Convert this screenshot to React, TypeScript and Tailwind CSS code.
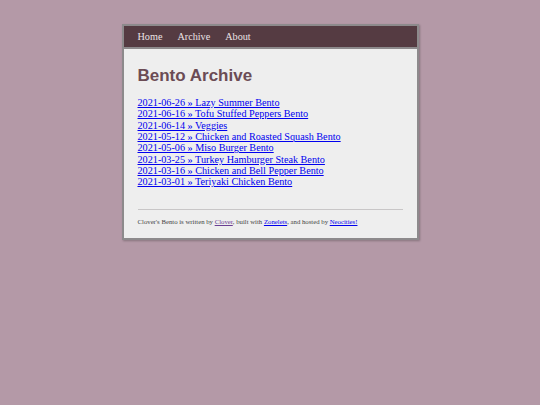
import React from "react";

const posts = [
  "2021-06-26 » Lazy Summer Bento",
  "2021-06-16 » Tofu Stuffed Peppers Bento",
  "2021-06-14 » Veggies",
  "2021-05-12 » Chicken and Roasted Squash Bento",
  "2021-05-06 » Miso Burger Bento",
  "2021-03-25 » Turkey Hamburger Steak Bento",
  "2021-03-16 » Chicken and Bell Pepper Bento",
  "2021-03-01 » Teriyaki Chicken Bento",
];

export default function App() {
  return (
    <div className="min-h-[405px] bg-[#b499a7] pt-[24px] font-['Liberation_Serif',serif]">
      <div className="mx-auto w-[297px] border-2 border-[#8d8a8c] bg-[#eeeeee] shadow-[1px_1px_2px_rgba(0,0,0,0.25)]">
        <nav className="flex h-[23px] items-center gap-[15px] border-b-2 border-[#8d8a8c] bg-[#553b42] px-[14px] text-[10.2px] text-[#ece2e5]">
          <span>Home</span>
          <span>Archive</span>
          <span>About</span>
        </nav>
        <div className="px-[14px] pb-[12px] pt-[17px]">
          <h1 className="font-['Liberation_Sans',sans-serif] text-[17px] font-bold leading-[20px] text-[#6b4c55]">
            Bento Archive
          </h1>
          <ul className="mt-[11px] text-[10.2px] leading-[11.35px]">
            {posts.map((p) => (
              <li key={p}>
                <a href="#" className="text-[#0000ee] underline">
                  {p}
                </a>
              </li>
            ))}
          </ul>
          <hr className="mt-[21px] border-t border-[#c8c6c7]" />
          <p className="mt-[8px] text-[6.75px] leading-[8px] text-[#444]">
            Clover's Bento is written by{" "}
            <a href="#" className="text-[#6a3f93] underline">Clover</a>, built with{" "}
            <a href="#" className="text-[#0000ee] underline">Zonelets</a>, and hosted by{" "}
            <a href="#" className="text-[#0000ee] underline">Neocities!</a>
          </p>
        </div>
      </div>
    </div>
  );
}
